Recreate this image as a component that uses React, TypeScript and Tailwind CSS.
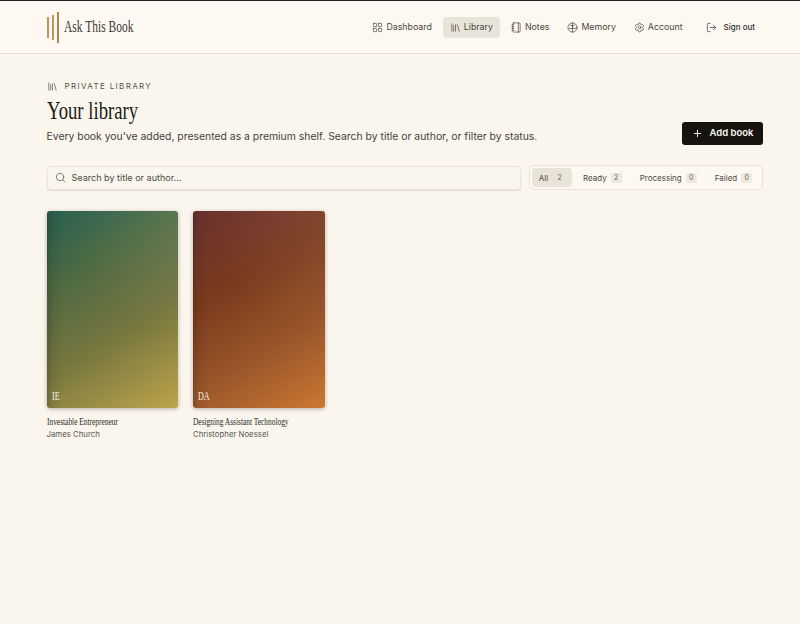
import { LayoutGrid, Library, LogOut, Notebook, Plus, Search, Settings } from "lucide-react";

const sans = "font-['Inter',sans-serif]";
const serif = "font-['Liberation_Serif',serif]";
// Liberation Serif is wider than the display face, so squeeze it
const squeeze = "inline-block origin-left scale-x-[0.72] whitespace-nowrap";

// Round memory glyph: circle, centre line and two branches
const MemoryIcon = ({ size }: { size: number; strokeWidth?: number }) => (
  <svg width={size} height={size} viewBox="0 0 24 24" fill="none" stroke="currentColor" strokeWidth={1.6} strokeLinecap="round" strokeLinejoin="round">
    <circle cx="12" cy="12" r="10" />
    <path d="M12 2v20" />
    <path d="M12 9 7.5 6.5M12 9l4.5-2.5" />
    <path d="M12 14H5M12 14h7" />
  </svg>
);

const nav = [
  { label: "Dashboard", icon: LayoutGrid },
  { label: "Library", icon: Library, active: true },
  { label: "Notes", icon: Notebook },
  { label: "Memory", icon: MemoryIcon },
  { label: "Account", icon: Settings },
];

const filters = [
  { label: "All", count: 2, active: true },
  { label: "Ready", count: 2 },
  { label: "Processing", count: 0 },
  { label: "Failed", count: 0 },
];

// Book card with gradient cover
const BookCard = ({ cover, initials, title, author }: { cover: string; initials: string; title: string; author: string }) => (
  <div className="w-[131.5px]">
    <div className={`h-[197px] rounded-[3px] flex items-end px-[5px] py-[4px] shadow-[0_1px_4px_rgba(60,40,20,0.35)] ${cover}`}>
      <span className={`${serif} inline-block origin-left scale-x-[0.62] whitespace-nowrap text-[13px] leading-4 text-[#f7f1e4]`}>{initials}</span>
    </div>
    <div className={`${serif} mt-[7px] text-[10.5px] leading-[14px] text-[#2c2a26]`}>
      <span className="inline-block origin-left scale-x-[0.705] whitespace-nowrap">{title}</span>
    </div>
    <div className={`${sans} text-[7.8px] leading-[11px] text-[#5c5850]`}>{author}</div>
  </div>
);

export default function App() {
  return (
    <div className={`${sans} min-h-[624px] bg-[#faf6ee] border-t border-[#26231f]`}>
      {/* Header */}
      <header className="h-[53px] bg-[#fdf9f2] border-b border-[#e6e0d4] pl-[46.5px] pr-[37px] flex items-center justify-between">
        <div className="flex items-center gap-[5px]">
          <div className="flex items-center gap-[2.5px]">
            <div className="w-[2.5px] h-[21px] bg-[#c0965a]" />
            <div className="w-[2.5px] h-[25px] bg-[#c0965a]" />
            <div className="w-[2.5px] h-[31px] bg-[#b0854a]" />
          </div>
          <span className={`${serif} ${squeeze} text-[16px] text-[#3d3a35]`}>Ask This Book</span>
        </div>
        <nav className="flex items-center gap-[4px]">
          {nav.map(({ label, icon: Icon, active }) => (
            <div
              key={label}
              className={`h-[21px] px-[7px] rounded-[4px] flex items-center gap-[3px] text-[8.8px] text-[#4b4740] ${active ? "bg-[#e9e4d9]" : ""}`}
            >
              <Icon size={11} strokeWidth={1.5} />
              {label}
            </div>
          ))}
          <div className="ml-[4px] h-[21px] pl-[8px] pr-[8px] flex items-center gap-[7px] text-[8px] font-medium text-[#33302b]">
            <LogOut size={11} strokeWidth={1.5} />
            Sign out
          </div>
        </nav>
      </header>

      <main className="pl-[46.5px] pr-[37px]">
        {/* Title block */}
        <div className="flex items-end justify-between pt-[26px]">
          <div>
            <div className="flex items-center gap-[7px] text-[8px] leading-3 tracking-[1.35px] text-[#56524a]">
              <Library size={11} strokeWidth={1.5} />
              PRIVATE LIBRARY
            </div>
            <h1 className={`${serif} mt-[2px] text-[26px] leading-[34px] text-[#1e1b17]`}>
              <span className={squeeze}>Your library</span>
            </h1>
            <p className="mt-[1px] text-[10.4px] leading-4 text-[#45423b]">
              Every book you've added, presented as a premium shelf. Search by title or author, or filter by status.
            </p>
          </div>
          <button className="h-[23px] w-[81px] rounded-[3px] bg-[#17130f] text-[#faf6ee] flex items-center justify-center gap-[7px] text-[9.5px] font-semibold">
            <Plus size={11} strokeWidth={2} />
            Add book
          </button>
        </div>

        {/* Search and filters */}
        <div className="mt-[20px] flex items-center gap-[8px]">
          <div className="flex-1 h-[24px] rounded-[4px] border border-[#ebe5d8] bg-[#faf6ee] shadow-[0_1px_1px_rgba(60,40,20,0.12)] flex items-center gap-[6px] px-[7px] text-[9.05px] text-[#4d4a43]">
            <Search size={11} strokeWidth={1.5} />
            Search by title or author...
          </div>
          <div className="w-[234px] h-[25px] rounded-[5px] border border-[#e8e2d6] bg-[#fdf9f2] flex items-center px-[2px] text-[8px] text-[#4d4a43]">
            {filters.map((f) => (
              <div
                key={f.label}
                className={`h-[19px] shrink-0 rounded-[4px] flex items-center ${f.active ? "w-[40px] mr-[2px] bg-[#e9e4d9] justify-center gap-[6px]" : "px-[9px] gap-[4px]"}`}
              >
                {f.label}
                <span className={`min-w-[11px] h-[10px] px-[3px] rounded-[2px] text-[7px] leading-[10px] text-center text-[#6a665d] ${f.active ? "" : "bg-[#eee9de]"}`}>{f.count}</span>
              </div>
            ))}
          </div>
        </div>

        {/* Books */}
        <div className="mt-[21px] flex gap-[15px]">
          <BookCard
            cover="bg-[linear-gradient(90deg,rgba(20,15,10,0.2),rgba(20,15,10,0.07)_4%,rgba(20,15,10,0)_12%),radial-gradient(circle_at_100%_0%,rgba(255,255,255,0.08),rgba(255,255,255,0)_50%),linear-gradient(150deg,#27604f_0%,#4f6a42_30%,#76763f_60%,#bca44b_100%)]"
            initials="IE"
            title="Investable Entrepreneur"
            author="James Church"
          />
          <BookCard
            cover="bg-[linear-gradient(90deg,rgba(20,10,5,0.18),rgba(20,10,5,0.06)_4%,rgba(20,10,5,0)_12%),radial-gradient(circle_at_100%_0%,rgba(255,255,255,0.07),rgba(255,255,255,0)_50%),linear-gradient(150deg,#6a3230_0%,#7a3a1d_35%,#98532a_65%,#ca7832_100%)]"
            initials="DA"
            title="Designing Assistant Technology"
            author="Christopher Noessel"
          />
        </div>
      </main>
    </div>
  );
}
